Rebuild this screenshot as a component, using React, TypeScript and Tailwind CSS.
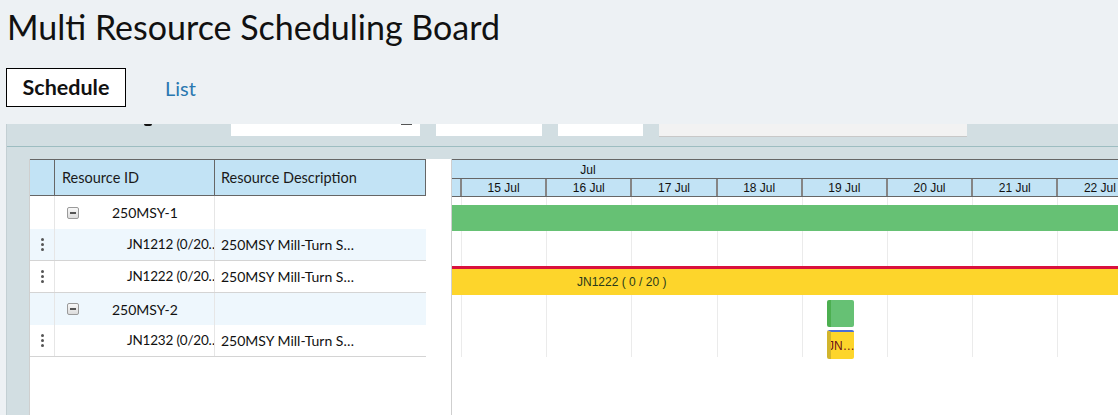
import React from 'react';

type Row = {
  kind: 'group' | 'job';
  id: string;
  desc?: string;
  bg: string;
  border: boolean;
  h: string;
};

const rows: Row[] = [
  { kind: 'group', id: '250MSY-1', bg: 'bg-white', border: false, h: 'h-[33px]' },
  { kind: 'job', id: 'JN1212 (0/20…', desc: '250MSY Mill-Turn S…', bg: 'bg-[#eef7fd]', border: true, h: 'h-[32px]' },
  { kind: 'job', id: 'JN1222 (0/20…', desc: '250MSY Mill-Turn S…', bg: 'bg-white', border: true, h: 'h-[32px]' },
  { kind: 'group', id: '250MSY-2', bg: 'bg-[#eef7fd]', border: false, h: 'h-[32px]' },
  { kind: 'job', id: 'JN1232 (0/20…', desc: '250MSY Mill-Turn S…', bg: 'bg-white', border: true, h: 'h-[32px]' },
];

const days = ['15 Jul', '16 Jul', '17 Jul', '18 Jul', '19 Jul', '20 Jul', '21 Jul', '22 Jul'];

function Dots() {
  return (
    <div className="flex flex-col items-center gap-[2px]">
      <span className="block h-[3px] w-[3px] rounded-full bg-[#555]" />
      <span className="block h-[3px] w-[3px] rounded-full bg-[#555]" />
      <span className="block h-[3px] w-[3px] rounded-full bg-[#555]" />
    </div>
  );
}

function MinusBox() {
  return (
    <span className="flex h-[12px] w-[12px] items-center justify-center rounded-[2px] border border-[#9a9a9a] bg-gradient-to-b from-[#f8f8f8] to-[#dcdcdc]">
      <span className="block h-[2px] w-[6px] bg-[#555]" />
    </span>
  );
}

export default function App() {
  return (
    <div
      className="flex h-[415px] w-[1118px] flex-col overflow-hidden bg-[#edf1f4] text-[#111]"
      style={{ fontFamily: 'Lato, "Open Sans", sans-serif' }}
    >
      {/* Title */}
      <h1 className="pl-[7px] pt-[5px] text-[34px] leading-[44px] font-normal text-[#111]">
        Multi Resource Scheduling Board
      </h1>

      {/* Tabs */}
      <div className="mt-[19px] flex items-center pl-[6px]">
        <div className="flex h-[39px] w-[120px] items-center justify-center border border-black bg-white text-[21.5px] font-bold">
          Schedule
        </div>
        <div className="ml-[39px] text-[20px] text-[#2a78b0]">List</div>
      </div>

      {/* Board panel */}
      <div className="ml-[6px] mt-[17px] flex flex-1 flex-col border-l border-[#c3cfd3] bg-[#d2dee2]">
        {/* Toolbar (scrolled, only the bottom shows) */}
        <div className="flex h-[23px] items-start border-b border-[#9dbdc1]">
          <span className="ml-[137px] mt-0 block h-[2px] w-[8px] rounded-b bg-[#111]" />
          <div className="relative ml-[79px] h-[12px] w-[189px] bg-white">
            <span className="absolute left-[170px] top-0 block h-[1px] w-[11px] bg-[#555]" />
          </div>
          <div className="ml-[16px] h-[12px] w-[106px] bg-white" />
          <div className="ml-[16px] h-[12px] w-[85px] bg-white" />
          <div className="ml-[16px] h-[13px] w-[308px] border-b border-[#c8c8c8] bg-[#f2f2f2]" />
        </div>

        {/* Grid + gantt */}
        <div className="ml-[22px] mt-[12px] flex flex-1 bg-white">
          {/* Resource table */}
          <div className="flex w-[397px] flex-col border-l border-[#cfcfcf]">
            <div className="flex h-[37px] items-stretch border-y border-[#666] bg-[#c2e3f5] text-[14.5px] text-[#1a1a1a]">
              <div className="w-[25px] border-r border-[#666]" />
              <div className="flex w-[160px] items-center border-r border-[#666] pl-[7px]">Resource ID</div>
              <div className="flex flex-1 items-center border-r border-[#666] pl-[6px]">Resource Description</div>
            </div>
            {rows.map((r, i) => (
              <div
                key={i}
                className={`flex ${r.h} items-stretch ${r.bg} ${r.border ? 'border-b border-[#d4d4d4]' : ''} text-[14px]`}
              >
                <div className="flex w-[25px] items-center justify-center border-r border-[#e6e6e6]">
                  {r.kind === 'job' && <Dots />}
                </div>
                <div className="flex w-[160px] items-center overflow-hidden whitespace-nowrap border-r border-[#e6e6e6]">
                  {r.kind === 'group' ? (
                    <>
                      <span className="ml-[12px]">
                        <MinusBox />
                      </span>
                      <span className="ml-[33px]">{r.id}</span>
                    </>
                  ) : (
                    <span className="ml-[72px] text-[13.5px] tracking-[-0.2px]">{r.id}</span>
                  )}
                </div>
                <div className="flex flex-1 items-center overflow-hidden whitespace-nowrap pl-[6px]">
                  {r.desc}
                </div>
              </div>
            ))}
          </div>

          {/* Splitter */}
          <div className="w-[26px] border-r border-[#cfcfcf] bg-white" />

          {/* Gantt */}
          <div className="flex flex-1 flex-col overflow-hidden" style={{ fontFamily: '"Liberation Sans", Arial, sans-serif' }}>
            <div className="h-[19px] border-t border-[#666] bg-[#c2e3f5]">
              <div className="w-[272px] pt-[3px] text-center text-[12px] leading-[14px] text-[#111]">Jul</div>
            </div>
            <div className="flex h-[19px] border-y border-[#666] bg-[#c2e3f5]">
              <div className="w-[8px] shrink-0" />
              {days.map((d) => (
                <div
                  key={d}
                  className="flex w-[85.2px] shrink-0 items-center justify-center border-l-2 border-[#858585] text-[12px] text-[#111]"
                >
                  {d}
                </div>
              ))}
            </div>

            <div className="relative flex-1">
              {/* Vertical day lines */}
              <div className="flex h-[160px]">
                <div className="w-[9px] shrink-0" />
                {days.map((d) => (
                  <div key={d} className="w-[85.2px] shrink-0 border-l border-[#ebebeb]" />
                ))}
              </div>

              {/* Bars */}
              <div className="absolute left-0 right-0 top-[8px] h-[26px] bg-[#66c174]" />
              <div className="absolute left-0 right-0 top-[69px] h-[3px] bg-[#d9113d]" />
              <div className="absolute left-0 right-0 top-[72px] flex h-[26px] items-center bg-[#fdd52b] pl-[125px] text-[12px] text-[#2a3a1a]">
                JN1222 ( 0 / 20 )
              </div>
              <div className="absolute left-[375px] top-[103px] h-[27px] w-[27px] rounded-[2px] border-l-4 border-[#4caf50] bg-[#66c174]" />
              <div className="absolute left-[375px] top-[133px] flex h-[29px] w-[27px] items-center overflow-hidden rounded-[2px] border-l-4 border-t-2 border-l-[#d2b52c] border-t-[#4a6fd8] bg-[#fdd52b] text-[12px] text-[#6b0f1a]">
                <span className="-ml-[3px]">JN…</span>
              </div>
            </div>
          </div>
        </div>
      </div>
    </div>
  );
}
